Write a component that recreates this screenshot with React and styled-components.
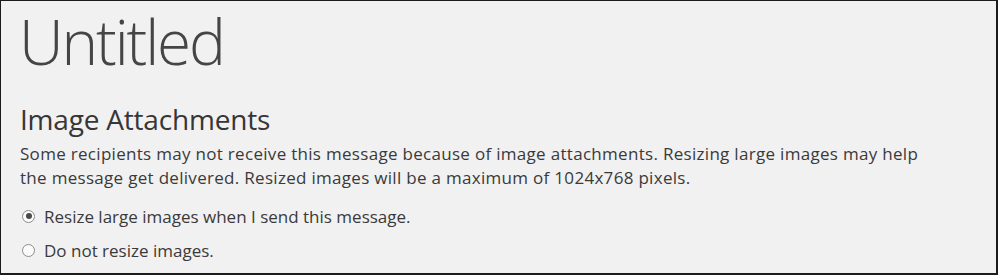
import React from "react";
import styled, { createGlobalStyle } from "styled-components";

const Global = createGlobalStyle`
  html, body { margin: 0; padding: 0; background: #f1f1f1; }
  * { box-sizing: border-box; }
`;

const Frame = styled.div`
  width: 998px;
  height: 275px;
  background: #f1f1f1;
  border: 1px solid #1c1c1c;
  border-right-width: 2px;
  border-bottom-width: 2px;
  padding: 0 0 0 18px;
  font-family: "Open Sans", "Noto Sans", sans-serif;
  color: #3a3a3a;
  overflow: hidden;
`;

const Title = styled.h1`
  margin: -3px 0 0 0;
  font-size: 62px;
  font-weight: 300;
  line-height: 86px;
  color: #454545;
  letter-spacing: -2.1px;
`;

const SectionTitle = styled.h2`
  margin: 16px 0 0 1px;
  font-size: 28px;
  font-weight: 400;
  line-height: 38px;
  color: #363636;
  letter-spacing: -0.2px;
`;

const Body = styled.p`
  margin: 4px 0 0 1px;
  font-size: 17px;
  line-height: 24px;
  letter-spacing: 0.3px;
  color: #3a3a3a;
`;

const Options = styled.div`
  display: flex;
  flex-direction: column;
  gap: 10px;
  margin-top: 15px;
  margin-left: 3px;
`;

const Option = styled.label`
  display: flex;
  align-items: center;
  gap: 9px;
  font-size: 17px;
  line-height: 24px;
  color: #3a3a3a;
`;

const Radio = styled.span`
  width: 13px;
  height: 13px;
  flex: none;
  margin-top: -2px;
  border-radius: 50%;
  border: 1px solid #8c8c8c;
  background: #fbfbfb;
  display: flex;
  align-items: center;
  justify-content: center;
  &::after {
    content: "";
    width: 6px;
    height: 6px;
    border-radius: 50%;
    background: ${(p) => (p.$checked ? "#4a4a4a" : "transparent")};
  }
`;

export default function App() {
  return (
    <>
      <Global />
      <Frame>
        <Title>Untitled</Title>
        <SectionTitle>Image Attachments</SectionTitle>
        <Body>
          Some recipients may not receive this message because of image attachments. Resizing large images may help
          <br />
          the message get delivered. Resized images will be a maximum of 1024x768 pixels.
        </Body>
        <Options>
          <Option>
            <Radio $checked />
            Resize large images when I send this message.
          </Option>
          <Option>
            <Radio />
            Do not resize images.
          </Option>
        </Options>
      </Frame>
    </>
  );
}
